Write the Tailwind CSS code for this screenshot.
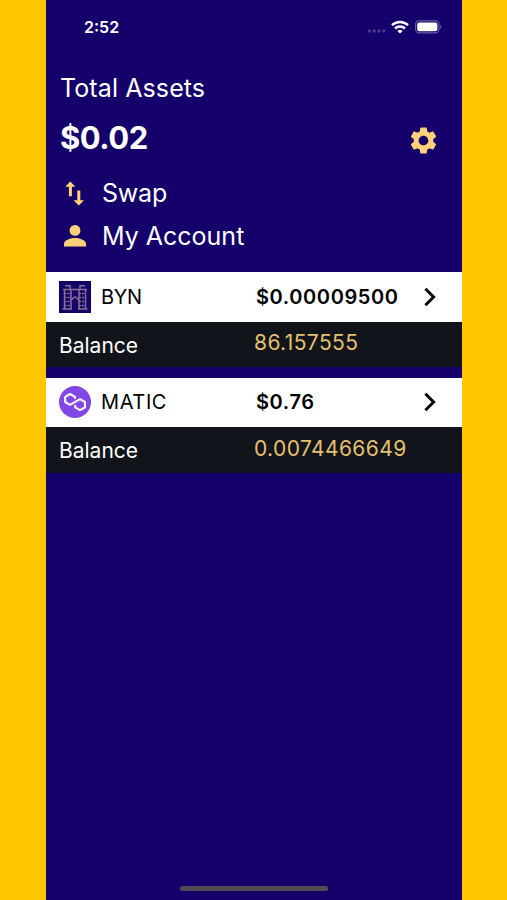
<!DOCTYPE html>
<html lang="en">
<head>
    <meta charset="UTF-8">
    <meta name="viewport" content="width=device-width, initial-scale=1.0">
    <title>Wallet</title>
    <script src="https://cdn.jsdelivr.net/npm/@tailwindcss/browser@4"></script>
</head>
<body class="bg-[#ffc700] font-['Inter',sans-serif]">
    <!-- Phone screen -->
    <div class="ml-[46px] w-[416px] h-[900px] flex flex-col bg-[#15006b] text-white overflow-hidden">
        <!-- Status bar -->
        <div class="h-[54px] pl-[38px] pr-5 flex items-center justify-between">
            <span class="text-[16px] font-semibold">2:52</span>
            <div class="flex items-center">
                <svg class="w-[19px] h-4 mr-[5px]" viewBox="0 0 19 16" fill="#4a3b90">
                    <circle cx="2.4" cy="12" r="1.7"/>
                    <circle cx="7.2" cy="12" r="1.7"/>
                    <circle cx="12" cy="12" r="1.7"/>
                    <circle cx="16.8" cy="12" r="1.7"/>
                </svg>
                <svg class="w-[18px] h-[14px] mr-[6px]" viewBox="0 0 18 14" fill="none" stroke="#fff" stroke-width="2.5">
                    <path d="M1 5.2a11.5 11.5 0 0 1 16 0"/>
                    <path d="M4 8.5a7.2 7.2 0 0 1 10 0"/>
                    <path d="M9 13.6 6.4 11a3.8 3.8 0 0 1 5.2 0z" fill="#fff" stroke="none"/>
                </svg>
                <svg class="w-[27px] h-[14px]" viewBox="0 0 27 14">
                    <rect x="0.6" y="0.9" width="23.4" height="12" rx="3.6" fill="none" stroke="#6a5da5" stroke-width="1.1"/>
                    <rect x="2.2" y="2.5" width="20.2" height="8.8" rx="2" fill="#fff"/>
                    <path d="M25.2 4.8c1.6.7 1.6 3.5 0 4.2z" fill="#6a5da5"/>
                </svg>
            </div>
        </div>

        <!-- Total -->
        <div class="pl-[14px] pr-[25px]">
            <h1 class="h-[69px] flex items-center text-[25px] leading-none tracking-[0.1px]">Total Assets</h1>
            <div class="-mt-[9px] h-[47px] flex items-center justify-between">
                <span class="text-[31px] leading-none font-bold tracking-[-0.5px]">$0.02</span>
                <svg class="w-[27px] h-[27px] mt-[5px]" viewBox="2 2 20 20" fill="#ffd27a">
                    <path d="M19.14 12.94c.04-.3.06-.61.06-.94 0-.32-.02-.64-.07-.94l2.03-1.58a.49.49 0 0 0 .12-.61l-1.92-3.32a.488.488 0 0 0-.59-.22l-2.39.96c-.5-.38-1.03-.7-1.62-.94l-.36-2.54a.484.484 0 0 0-.48-.41h-3.84c-.24 0-.43.17-.47.41l-.36 2.54c-.59.24-1.13.57-1.62.94l-2.39-.96c-.22-.08-.47 0-.59.22L2.74 8.87c-.12.21-.08.47.12.61l2.03 1.58c-.05.3-.09.63-.09.94s.02.64.07.94l-2.03 1.58a.49.49 0 0 0-.12.61l1.92 3.32c.12.22.37.29.59.22l2.39-.96c.5.38 1.03.7 1.62.94l.36 2.54c.05.24.24.41.48.41h3.84c.24 0 .44-.17.47-.41l.36-2.54c.59-.24 1.13-.56 1.62-.94l2.39.96c.22.08.47 0 .59-.22l1.92-3.32c.12-.22.07-.47-.12-.61l-2.01-1.58zM12 15.6c-1.98 0-3.6-1.62-3.6-3.6s1.62-3.6 3.6-3.6 3.6 1.62 3.6 3.6-1.62 3.6-3.6 3.6z"/>
                </svg>
            </div>
        </div>

        <!-- Menu -->
        <nav class="mt-[11px] pl-[14px] text-[25px] leading-none">
            <a class="h-[43px] flex items-center">
                <svg class="w-[30px] h-[30px] mr-3" viewBox="0 0 30 30" fill="#ffd27a">
                    <path d="M10.3 2.4 15.4 7.7H11.9V17.3H8.9V7.7H5.4z"/>
                    <path d="M18.8 26.4 13.6 21.2H17.3V11.4H20.3V21.2H24z"/>
                </svg>
                <span class="tracking-[-0.2px]">Swap</span>
            </a>
            <a class="h-[43px] flex items-center">
                <svg class="w-[30px] h-[30px] mr-3" viewBox="0 0 30 30" fill="#ffd27a">
                    <circle cx="15" cy="8.4" r="5.4"/>
                    <path d="M4 24.6V21.8c0-3.7 7.3-5.7 11-5.7s11 2 11 5.7V24.6z"/>
                </svg>
                <span>My Account</span>
            </a>
        </nav>

        <!-- Tokens -->
        <div class="mt-[14.3px] flex flex-col gap-[10.4px]">
            <section>
                <div class="h-[49.5px] pl-[13px] flex items-center bg-white text-black">
                    <svg class="w-8 h-8" viewBox="0 0 32 32">
                        <rect width="32" height="32" fill="#15006b"/>
                        <g fill="none" stroke="#85748f" stroke-width="1.5">
                            <path d="M4 8.5H28M6 4.8H11V8M21 8V4.8H26"/>
                            <path d="M5.5 9V28M12 9V28M20 9V28M26.5 9V28"/>
                            <path d="M5.5 12.5H12M5.5 16.5H12M5.5 20.5H12M5.5 24.5H12M20 12.5H26.5M20 16.5H26.5M20 20.5H26.5M20 24.5H26.5" stroke-dasharray="2 1"/>
                            <path d="M12 19C14 18 14 16 16 16S18 18 20 19M3.5 28H13M19 28H28.5"/>
                        </g>
                    </svg>
                    <span class="ml-[10px] -mt-px w-[155px] text-[20px] tracking-[-0.3px]">BYN</span>
                    <span class="-mt-px w-[167px] text-[20px] font-semibold tracking-[0.6px]">$0.00009500</span>
                    <svg class="w-[14px] h-5" viewBox="0 0 14 20" fill="none" stroke="#000" stroke-width="3">
                        <path d="M2.4 1.8 10.6 10 2.4 18.2"/>
                    </svg>
                </div>
                <div class="h-[45.5px] pl-[13px] flex items-center bg-[#11151b] text-[21px]">
                    <span class="w-[195px] mt-0.5">Balance</span>
                    <span class="-mt-[3px] text-[#e5c06e] tracking-[0.4px]">86.157555</span>
                </div>
            </section>
            <section>
                <div class="h-[49.5px] pl-[13px] flex items-center bg-white text-black">
                    <svg class="w-8 h-8" viewBox="0 0 32 32">
                        <circle cx="16" cy="16" r="16" fill="#8247e5"/>
                        <path d="M16 13V10.8L11 8 6.2 10.8V16L11 18.8 21 13.2 26 16V21.4L21 24.2 16.2 21.4V19" fill="none" stroke="#fff" stroke-width="2.1" stroke-linejoin="round"/>
                    </svg>
                    <span class="ml-[10px] w-[155px] text-[20px] tracking-[0.6px]">MATIC</span>
                    <span class="w-[167px] text-[20px] font-semibold tracking-[0.6px]">$0.76</span>
                    <svg class="w-[14px] h-5" viewBox="0 0 14 20" fill="none" stroke="#000" stroke-width="3">
                        <path d="M2.4 1.8 10.6 10 2.4 18.2"/>
                    </svg>
                </div>
                <div class="h-[45.5px] pl-[13px] flex items-center bg-[#11151b] text-[21px]">
                    <span class="w-[195px] mt-px">Balance</span>
                    <span class="-mt-[3px] text-[#e5c06e] tracking-[0.4px]">0.0074466649</span>
                </div>
            </section>
        </div>

        <!-- Home indicator -->
        <div class="mt-auto mb-[9px] mx-auto w-[148px] h-[5px] rounded-full bg-[#504d56]"></div>
    </div>
</body>
</html>
